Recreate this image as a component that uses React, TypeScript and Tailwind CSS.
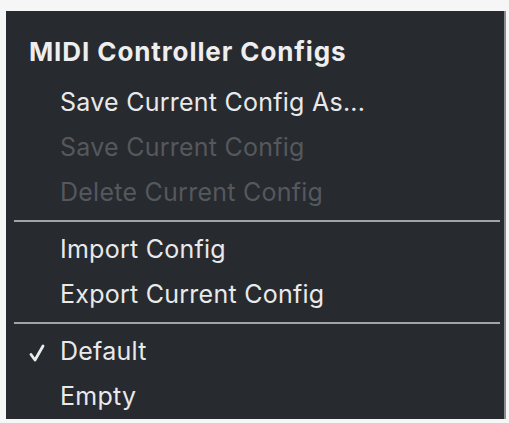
import React from "react";

const font = { fontFamily: "Inter, 'Liberation Sans', sans-serif" };

function Item({ label, disabled, checked }: { label: string; disabled?: boolean; checked?: boolean }) {
  return (
    <div className="flex h-[45px] items-center">
      <div className="flex w-[54px] justify-end pr-[15px]">
        {checked ? (
          <svg width="16" height="18" viewBox="0 0 16 18" className="mt-[2px]">
            <path d="M2 10.5 L6 16 L14 2" fill="none" stroke="#ececec" strokeWidth="2.8" strokeLinecap="round" strokeLinejoin="round" />
          </svg>
        ) : null}
      </div>
      <span className={`text-[25px] tracking-[0.25px] ${disabled ? "text-[#55585d]" : "text-[#e9e9ea]"}`}>{label}</span>
    </div>
  );
}

function Sep() {
  return <div className="my-[5px] ml-[8px] mr-[4px] h-[2px] bg-[#a3a4a6]" />;
}

export default function App() {
  return (
    <div className="h-[423px] w-[509px] bg-[#f6f6f6] pl-[6px] pt-[11px]" style={font}>
      <div className="w-[500px] border-r-2 border-[#8a8c90] bg-[#272a2f] pt-[18px]">
        <div className="flex h-[45px] items-center pl-[23px]">
          <span className="text-[26px] font-bold tracking-[0.9px] text-[#eeeeef]">MIDI Controller Configs</span>
        </div>
        <div className="h-[6px]" />
        <Item label="Save Current Config As..." />
        <Item label="Save Current Config" disabled />
        <Item label="Delete Current Config" disabled />
        <Sep />
        <Item label="Import Config" />
        <Item label="Export Current Config" />
        <Sep />
        <Item label="Default" checked />
        <Item label="Empty" />
      </div>
    </div>
  );
}
